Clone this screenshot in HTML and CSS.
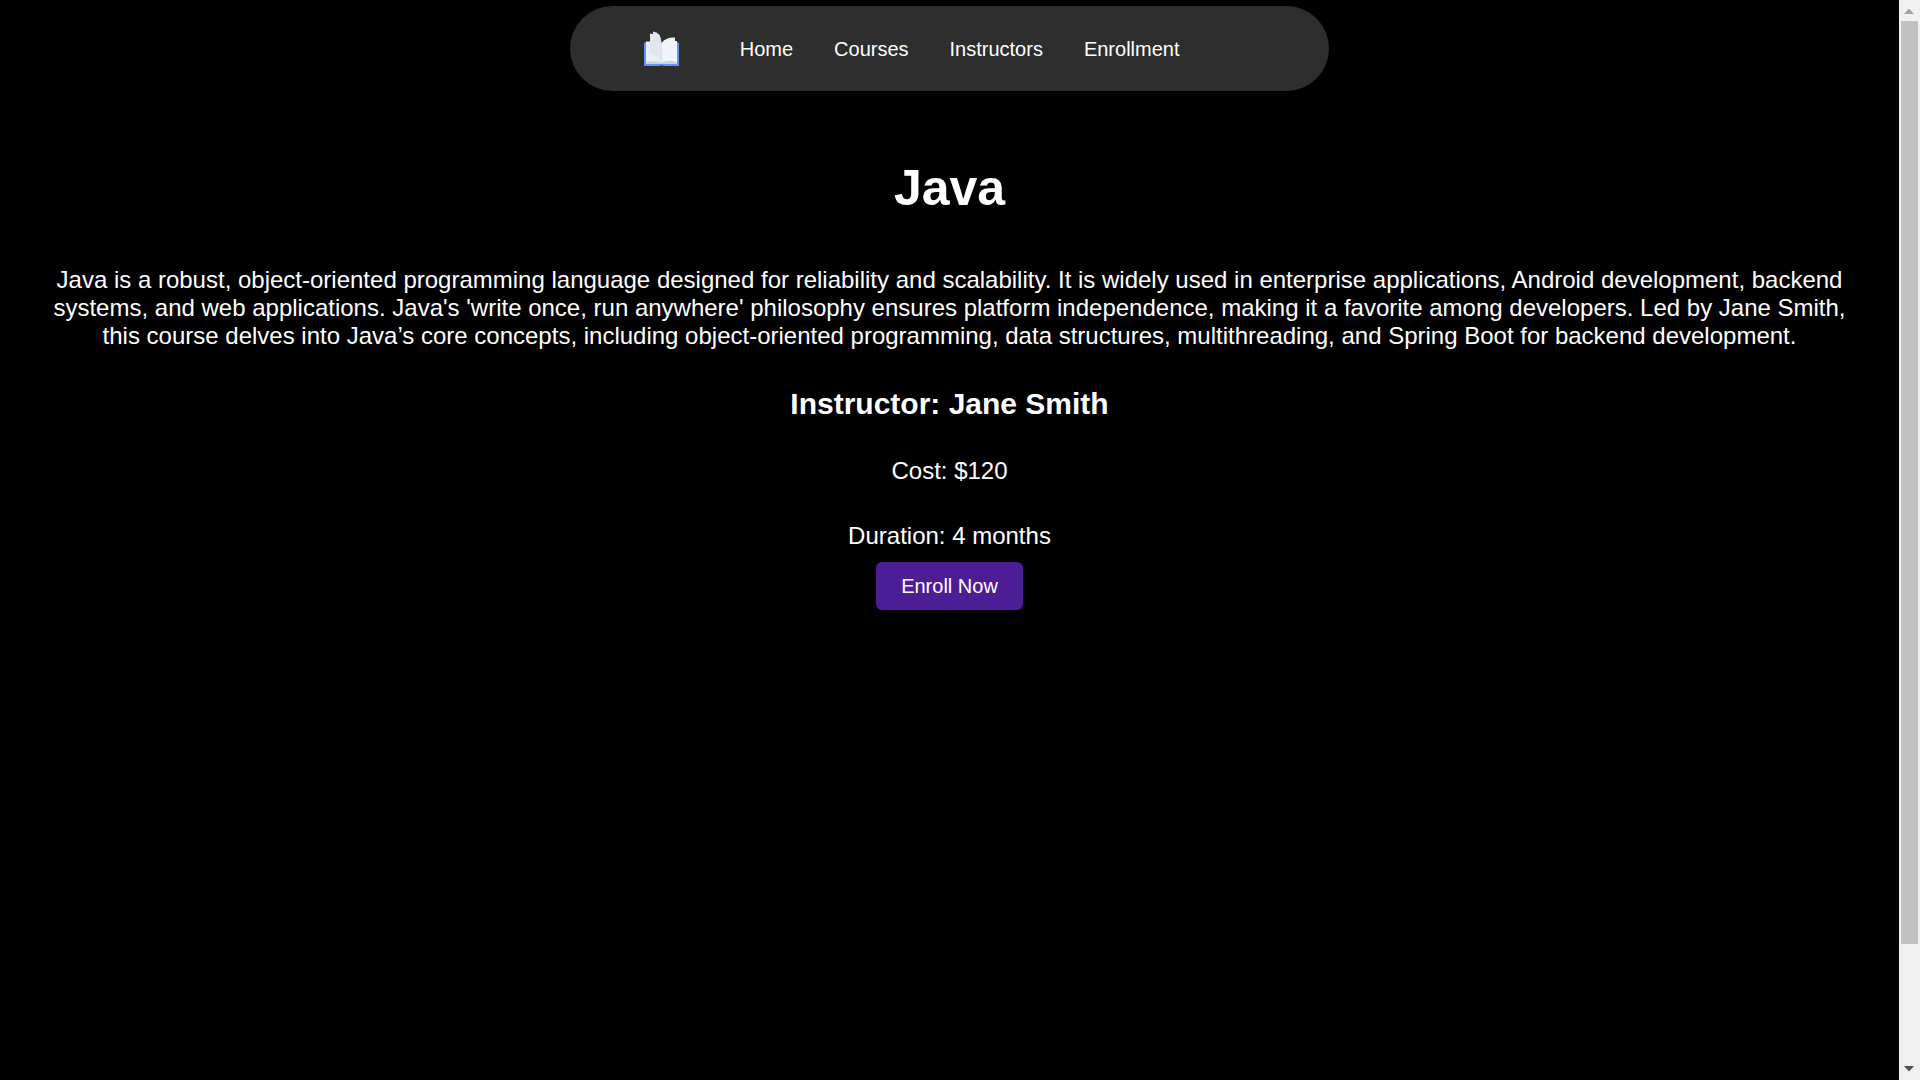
FILE: index.html
```html
<!DOCTYPE html>
<html lang="en">
<head>
  <meta charset="utf-8">
  <meta name="viewport" content="width=device-width, initial-scale=1">
  <title>Java</title>
  <link rel="stylesheet" href="styles.css">
</head>
<body>
  <div class="page">
    <header class="header">
      <nav class="navbar" aria-label="Main">
        <svg class="logo" viewBox="0 0 36 36" aria-hidden="true">
          <path fill="#6293f5" d="M0 12 2 11H33L35 12V35H0Z"/>
          <path fill="#3d5f9c" d="M16 34h3v1h-3z"/>
          <path fill="#c3d5e2" d="M2 29H33V33H2Z"/>
          <path fill="#e9eff4" d="M2 10.500H7L17.500 12V32Q12 29 2 31Z"/>
          <path fill="#f0f4f8" d="M17.500 32V12Q22 6 31 6.500V10H33V31Q23 28 17.500 32Z"/>
          <path fill="#dfe6ed" d="M6 2.500 9 3V.500Q17 1 17.500 12V32Q15 24 6 23Z"/>
        </svg>
        <ul class="menu">
          <li><a href="#home">Home</a></li>
          <li><a href="#courses">Courses</a></li>
          <li><a href="#instructors">Instructors</a></li>
          <li><a href="#enrollment">Enrollment</a></li>
        </ul>
      </nav>
    </header>
    <main class="course">
      <h1 class="title">Java</h1>
      <p class="text">Java is a robust, object-oriented programming language designed for reliability and scalability. It is widely used in enterprise applications, Android development, backend systems, and web applications. Java's 'write once, run anywhere' philosophy ensures platform independence, making it a favorite among developers. Led by Jane Smith, this course delves into Java’s core concepts, including object-oriented programming, data structures, multithreading, and Spring Boot for backend development.</p>
      <h2 class="instructor">Instructor: Jane Smith</h2>
      <p class="text">Cost: $120</p>
      <p class="text">Duration: 4 months</p>
      <button class="enroll" type="button">Enroll Now</button>
    </main>
  </div>
  <div class="scrollbar" aria-hidden="true">
    <svg class="arrow arrow-up" viewBox="0 0 21 21"><path d="M5 14 9.500 9h1L15 14Z"/></svg>
    <div class="track"><div class="thumb"></div></div>
    <svg class="arrow arrow-down" viewBox="0 0 21 21"><path d="M5 7 9.500 12h1L15 7Z"/></svg>
  </div>
</body>
</html>
```
FILE: styles.css
```css
* {
  box-sizing: border-box;
}

body {
  display: grid;
  grid-template-columns: 1fr 21px;
  min-height: 100vh;
  margin: 0;
  background: #000;
  color: #fff;
  font-family: "Liberation Sans", Arial, sans-serif;
}

.header {
  padding-top: 6px;
}

.navbar {
  display: flex;
  align-items: center;
  gap: 60px;
  width: 40%;
  min-width: 640px;
  margin: 0 auto;
  padding: 25px 74px 24px;
  border-radius: 43px;
  background: #2e2e2e;
}

.logo {
  width: 36px;
  height: 36px;
}

.menu {
  display: flex;
  gap: 41px;
  margin: 0;
  padding: 0;
  list-style: none;
  font-size: 20px;
  line-height: 24px;
}

.menu a {
  color: #fff;
  text-decoration: none;
}

.course {
  padding: 69px 50px;
  text-align: center;
}

.title {
  margin: 0 0 50px;
  font-size: 50px;
  line-height: 56px;
}

.text {
  margin: 0 0 37px;
  font-size: 24px;
  line-height: 28px;
}

.instructor {
  margin: 0 0 36px;
  font-size: 30px;
  line-height: 34px;
}

.text:last-of-type {
  margin-bottom: 12px;
}

.enroll {
  padding: 12px 25px;
  border: 0;
  border-radius: 6px;
  background: #4c1d95;
  color: #fff;
  font: 20px/24px "Liberation Sans", Arial, sans-serif;
  cursor: pointer;
}

.scrollbar {
  position: sticky;
  top: 0;
  display: flex;
  flex-direction: column;
  height: 100vh;
  background: #f0f0f0;
}

.arrow {
  width: 21px;
  height: 21px;
}

.arrow-up {
  fill: #a3a3a3;
}

.arrow-down {
  fill: #505050;
}

.track {
  display: grid;
  flex: 1;
  grid-template-rows: 8fr 1fr;
  padding: 0 2px;
}

.thumb {
  background: #c1c1c1;
}
```
